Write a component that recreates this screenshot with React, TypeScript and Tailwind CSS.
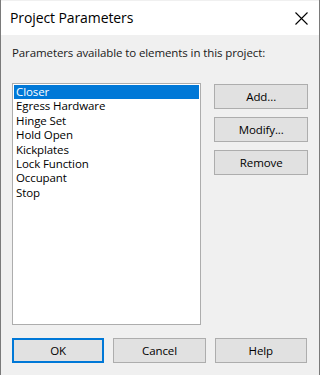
import React, { useState } from 'react';

const params = [
  'Closer',
  'Egress Hardware',
  'Hinge Set',
  'Hold Open',
  'Kickplates',
  'Lock Function',
  'Occupant',
  'Stop',
];

const font = { fontFamily: '"Open Sans", "Noto Sans", sans-serif' };

const Btn = ({ label, primary }: { label: string; primary?: boolean }) => (
  <button
    className={
      'h-[25px] bg-[#e1e1e1] text-[11.5px] leading-[14px] text-black ' +
      (primary ? 'border-2 border-[#0078d7]' : 'border border-[#adadad]')
    }
  >
    {label}
  </button>
);

const App = () => {
  const [selected, setSelected] = useState(0);

  return (
    <div
      className="w-[320px] h-[375px] bg-[#f0f0f0] border-l border-r border-[#7a7a7a] flex flex-col tracking-[-0.1px]"
      style={font}
    >
      {/* title bar */}
      <div className="h-[34px] bg-white flex items-center justify-between pl-[9px] pr-[10px] mt-[1px]">
        <span className="text-[14px] leading-[18px] text-black">Project Parameters</span>
        <svg width="13" height="13" viewBox="0 0 13 13" className="mr-[1px]">
          <path d="M0.5 0.5 L12.5 12.5 M12.5 0.5 L0.5 12.5" stroke="#000" strokeWidth="1.1" />
        </svg>
      </div>

      <div className="flex-1 flex flex-col px-[11px]">
        <p className="mt-[11px] text-[11.5px] leading-[14px] text-[#1a1a1a]">
          Parameters available to elements in this project:
        </p>

        <div className="mt-[23px] flex">
          {/* list */}
          <div className="w-[190px] h-[242px] bg-white border border-[#adadad] p-[1px]">
            {params.map((p, i) => (
              <div
                key={p}
                onClick={() => setSelected(i)}
                className={
                  'h-[14.4px] leading-[14.4px] pl-[2px] text-[11.5px] overflow-hidden ' +
                  (i === selected ? 'bg-[#0078d7] text-white' : 'text-black')
                }
              >
                {p}
              </div>
            ))}
          </div>

          {/* side buttons */}
          <div className="ml-[13px] w-[94px] flex flex-col gap-[8px] pt-[1px]">
            <Btn label="Add..." />
            <Btn label="Modify..." />
            <Btn label="Remove" />
          </div>
        </div>

        {/* footer buttons */}
        <div className="mt-[13px] grid grid-cols-3 gap-[9px] pr-[1px]">
          <Btn label="OK" primary />
          <Btn label="Cancel" />
          <Btn label="Help" />
        </div>
      </div>
    </div>
  );
};

export default App;
